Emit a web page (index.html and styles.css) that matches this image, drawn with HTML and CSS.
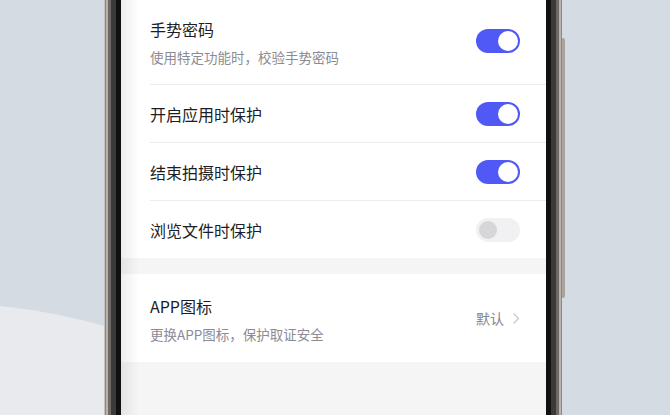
FILE: index.html
```html
<!DOCTYPE html>
<html lang="zh-CN">
  <head>
    <meta charset="UTF-8" />
    <meta name="viewport" content="width=device-width, initial-scale=1.0" />
    <title>隐私保护</title>
    <link rel="stylesheet" href="styles.css">
  </head>
  <body>
    <div class="stage">
      <div class="phone">
        <div class="screen">
          <div class="group">
            <div class="row tall">
              <div class="text">
                <div class="title">手势密码</div>
                <div class="sub">使用特定功能时，校验手势密码</div>
              </div>
              <span class="switch on"></span>
            </div>
            <div class="row">
              <div class="title">开启应用时保护</div>
              <span class="switch on"></span>
            </div>
            <div class="row">
              <div class="title">结束拍摄时保护</div>
              <span class="switch on"></span>
            </div>
            <div class="row last">
              <div class="title">浏览文件时保护</div>
              <span class="switch"></span>
            </div>
          </div>
          <div class="group">
            <div class="row icon-row last">
              <div class="text">
                <div class="title">APP图标</div>
                <div class="sub">更换APP图标，保护取证安全</div>
              </div>
              <div class="value">
                默认
                <svg width="8" height="13" viewBox="0 0 8 13"><path d="M1.5 1.5 L6.5 6.5 L1.5 11.5" fill="none" stroke="#c9c9ce" stroke-width="1.3"/></svg>
              </div>
            </div>
          </div>
        </div>
        <span class="side-btn"></span>
      </div>
    </div>
  </body>
</html>
```

FILE: styles.css
```css
* {
  margin: 0;
  padding: 0;
  box-sizing: border-box;
}
html,
body {
  height: 100%;
  overflow: hidden;
}
body {
  font-family: "Noto Sans CJK SC", "Noto Sans", sans-serif;
  background-color: #d4dbe2;
  color: #1d1d25;
  position: relative;
}
body::before {
  content: "";
  position: absolute;
  left: -660px;
  top: 303px;
  width: 1200px;
  height: 1200px;
  border-radius: 50%;
  background: #e8eaee;
}
.stage {
  position: relative;
  padding-left: 121px;
}
.phone {
  position: relative;
  width: 425px;
}
.screen {
  position: relative;
  background-color: #f5f5f6;
  height: 430px;
  box-shadow: 0 0 0 5px #111, 0 0 0 10px #3c3a39, 0 0 0 13px #6e6965,
    0 0 0 15px #b8b3ad, 0 0 0 16px #8d8780, -17px 0 0 0 #c6c2bd;
}
.screen::after {
  content: "";
  position: absolute;
  top: 0;
  bottom: 0;
  left: 0;
  width: 18px;
  background: linear-gradient(to right, rgba(0, 0, 0, 0.07), rgba(0, 0, 0, 0));
  pointer-events: none;
}
.side-btn {
  position: absolute;
  right: -19px;
  top: 38px;
  width: 3px;
  height: 260px;
  background: #aaa49e;
  border-radius: 0 2px 2px 0;
}
.group {
  background-color: #fff;
  margin-bottom: 16px;
}
.row {
  display: flex;
  align-items: center;
  justify-content: space-between;
  margin-left: 29px;
  padding-right: 26px;
  height: 58px;
  border-bottom: 1px solid #ececef;
}
.row.tall {
  height: 85px;
  padding-bottom: 2px;
}
.row.last {
  border-bottom: none;
  height: 57px;
}
.row.icon-row {
  height: 88px;
}
.title {
  font-size: 16px;
  line-height: 24px;
  color: #1d1d25;
}
.sub {
  margin-top: 7px;
  font-size: 13.5px;
  line-height: 18px;
  color: #8b8b93;
}
.switch {
  position: relative;
  width: 44px;
  height: 24px;
  border-radius: 12px;
  background-color: #f1f1f3;
  flex-shrink: 0;
}
.switch::after {
  content: "";
  position: absolute;
  left: 3px;
  top: 3px;
  width: 18px;
  height: 18px;
  border-radius: 50%;
  background-color: #d6d6d8;
}
.switch.on {
  background-color: #5058f6;
}
.switch.on::after {
  left: 22px;
  top: 2px;
  width: 20px;
  height: 20px;
  background-color: #fff;
}
.value {
  display: flex;
  align-items: center;
  gap: 8px;
  font-size: 14px;
  color: #85858c;
}
```
